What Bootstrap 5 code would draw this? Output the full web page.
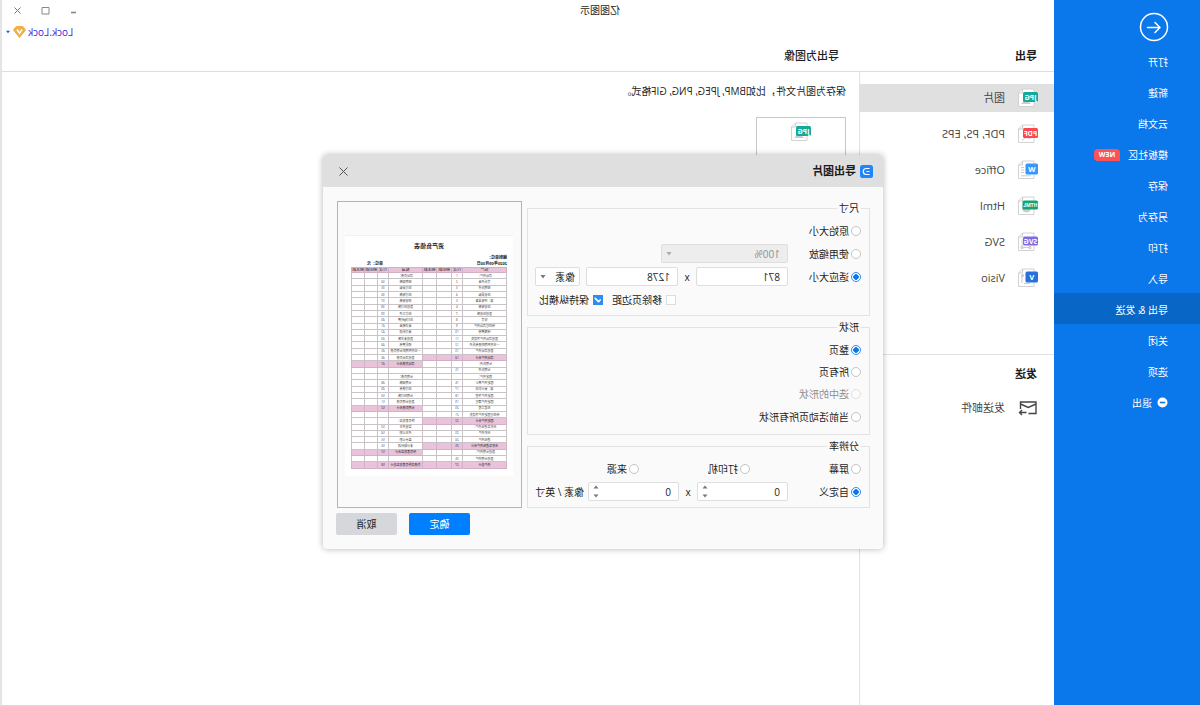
<!DOCTYPE html>
<html lang="zh-CN">
<head>
<meta charset="utf-8">
<meta name="viewport" content="width=device-width, initial-scale=1">
<title>亿图图示</title>
<link href="https://cdn.jsdelivr.net/npm/bootstrap@5.3.0/dist/css/bootstrap.min.css" rel="stylesheet">
<style>
  body { font-family: "Open Sans", "Noto Sans CJK SC", sans-serif; font-size: 10px; line-height: 14px; color: #1c1c1c; background: #fff; overflow: hidden; }
  /* the whole window is shown as a mirror image */
  .app-window { transform: scaleX(-1); border-right: 2px solid #e4e4e4; border-bottom: 1px solid #d9d9d9; }
  .fs-title { font-size: 11px; line-height: 16px; }

  .side-menu { width: 146px; background: #0a77eb; }
  .side-menu .back-btn { margin: 12px 0 3px 31px; width: 30px; height: 30px; }
  .side-menu .nav-link { height: 31px; padding: 2px 0 0 32px; color: #fff; font-size: 10px; }
  .side-menu .nav-link.active { background: #0766c6; }
  .side-menu .nav-link svg { margin-right: 5px; }
  .new-tag { background: #ff5257; font-size: 7px; line-height: 12px; width: 26px; border-radius: 4px 4px 4px 0; margin-left: 8px; }

  .title-row { height: 20px; }
  .window-tools { width: 144px; padding-right: 11px; gap: 19px; }
  .window-tools button { width: 9px; height: 18px; }
  .account-row { height: 24px; padding-right: 3px; }
  .account-row a { color: #3a20e0; gap: 2px; }
  .heading-row { height: 28px; border-bottom: 1px solid #dedede; padding-bottom: 3px; }
  .export-col { width: 195px; }
  .heading-row .export-col { padding-left: 17px; }
  .heading-row .pane-title { padding-left: 20px; font-weight: 500; }
  .export-list { border-right: 1px solid #e2e2e2; }
  .export-list .nav { padding: 12px 0 62px; gap: 8px; }
  .export-list .nav-link { height: 28px; padding: 0 0 0 16px; gap: 13px; color: #444; font-size: 11px; }
  .export-list .nav-link.active { background: #e0e0e0; }
  .send-block { border-top: 1px solid #e2e2e2; }
  .send-block h2 { margin: 11px 0 12px; padding-left: 17px; }
  .pane { padding: 12px 13px; }
  .format-card { width: 90px; height: 90px; border: 1px solid #c8c8c8; margin-top: 19px; padding-top: 4px; background: #fff; }

  .dialog-layer { position: absolute; inset: 0; padding: 0 4px 1px 0; }
  .export-dialog { width: 560px; border-radius: 4px; background: #fafafa; box-shadow: 0 0 6px rgba(0,0,0,.3); overflow: hidden; }
  .dialog-head { height: 32px; background: #dfdfdf; padding: 0 16px 0 10px; gap: 4px; }
  .dialog-main { padding: 14px 13px 0; gap: 5px; }
  .option-col { width: 343px; }
  .option-col fieldset { border: 1px solid #e3e3e3; padding: 4px 7px 4px 8px; margin-bottom: 4px; }
  .option-col fieldset.shape-set { padding-bottom: 6px; }
  .option-col legend { float: none; width: auto; height: 14px; margin: 0; padding: 0 2px; font-size: 10px; line-height: 14px; }
  .opt-row { height: 23px; display: flex; align-items: center; }
  .opt-row.tight { height: 22px; }
  .opt-row.checks { justify-content: flex-end; gap: 9px; padding-right: 4px; }
  .opt { display: flex; align-items: center; gap: 2px; white-space: nowrap; }
  .checks .opt { gap: 4px; }
  .opt.lead-col { width: 73px; }
  .opt.wide-col { width: 111px; }
  .opt .form-check-input { width: 10px; height: 10px; margin: 0; border: 1px solid #c4c4c4; box-shadow: none; flex: none; }
  .opt .form-check-input[type=radio]:checked { border-color: #2b8cf5; background: #fff radial-gradient(circle, #0a77eb 0 2.5px, transparent 3px); }
  .opt .form-check-input[type=checkbox] { border-radius: 0; border-color: #dcdcdc; }
  .opt .form-check-input[type=checkbox]:checked { background-color: #2b8cf5; border-color: #2b8cf5; background-size: 11px; background-position: center; }
  .opt .form-check-input:disabled { opacity: .5; }
  .opt .form-check-input:disabled + label { color: #8d8d8d; }
  .field { width: 92px; height: 19px; min-height: 0; padding: 0 7px; font-size: 10px; line-height: 16px; border: 1px solid #dedede; border-radius: 2px; color: #1c1c1c; background-color: #fff; }
  select.field { background-image: url("data:image/svg+xml,%3Csvg xmlns='http://www.w3.org/2000/svg' viewBox='0 0 6 4'%3E%3Cpath fill='%23777' d='M.5 0h5L3 3.6z'/%3E%3C/svg%3E"); background-size: 6px 4px; background-position: right 4px center; }
  select.field:disabled { width: 127px; background-color: #ededed; color: #8d8d8d; background-image: url("data:image/svg+xml,%3Csvg xmlns='http://www.w3.org/2000/svg' viewBox='0 0 6 4'%3E%3Cpath fill='%23aaa' d='M.5 0h5L3 3.6z'/%3E%3C/svg%3E"); }
  select.field.unit { width: 45px; padding: 0 10px 0 4px; }
  input.spin { appearance: textfield; width: 91px; background: #fff url("data:image/svg+xml,%3Csvg xmlns='http://www.w3.org/2000/svg' viewBox='0 0 6 13'%3E%3Cpath fill='%23777' d='M.5 3.6h5L3 .4zM.5 9.4h5L3 12.6z'/%3E%3C/svg%3E") no-repeat right 4px center / 6px 13px; }
  input.spin::-webkit-inner-spin-button { display: none; }
  .by { width: 18px; text-align: center; }

  .preview { width: 185px; border: 1px solid #b4b4b4; height: 307px; padding: 33px 7px 0 8px; }
  .paper { background: #fff; border-top: 1px solid #f0f0f0; height: 241px; padding: 5px 6px 0; font-size: 4px; line-height: 6px; color: #222; }
  .paper h3 { font-size: 6px; line-height: 10px; margin: 0 0 4px; font-weight: 700; text-align: center; }
  .paper .unit-note { padding-right: 16px; }
  .sheet { width: 155px; height: 202px; table-layout: fixed; border-collapse: collapse; font-size: 3px; line-height: 4px; color: #444; text-align: center; }
  .sheet th, .sheet td { border: 1px solid #c9c3c7; padding: 0; white-space: nowrap; font-weight: 400; overflow: hidden; }
  .sheet th { font-size: 4px; }
  .sheet .total { background: #e8c3da; border-color: #d3b0c6; color: #222; }

  .dialog-foot { padding: 5px 13px 14px; gap: 12px; }
  .dialog-foot .btn { width: 61px; height: 22px; padding: 0; font-size: 10px; line-height: 20px; border: 0; border-radius: 2px; }
  .btn-ok { background: #0080ff; color: #fff; }
  .btn-no { background: #d5d7db; color: #1c1c1c; }
</style>
</head>
<body>
<div class="app-window position-relative d-flex vh-100 bg-white">

  <aside class="side-menu flex-shrink-0 d-flex flex-column">
    <button class="back-btn btn p-0 border-0 d-block" type="button" aria-label="返回">
      <svg class="d-block" width="30" height="30" viewBox="0 0 30 30" fill="none" stroke="#fff" stroke-linecap="round" stroke-linejoin="round"><circle cx="15" cy="15" r="13.5" stroke-width="1.5"/><path d="M21.5 15.5H9.5M14 10.5l-5 5 5 5" stroke-width="1.5"/></svg>
    </button>
    <nav class="nav flex-column">
      <a class="nav-link d-flex align-items-center" href="#">打开</a>
      <a class="nav-link d-flex align-items-center" href="#">新建</a>
      <a class="nav-link d-flex align-items-center" href="#">云文档</a>
      <a class="nav-link d-flex align-items-center" href="#">模板社区<span class="new-tag text-center fw-bold">NEW</span></a>
      <a class="nav-link d-flex align-items-center" href="#">保存</a>
      <a class="nav-link d-flex align-items-center" href="#">另存为</a>
      <a class="nav-link d-flex align-items-center" href="#">打印</a>
      <a class="nav-link d-flex align-items-center" href="#">导入</a>
      <a class="nav-link d-flex align-items-center active" href="#" aria-current="page">导出 &amp; 发送</a>
      <a class="nav-link d-flex align-items-center" href="#">关闭</a>
      <a class="nav-link d-flex align-items-center" href="#">选项</a>
      <a class="nav-link d-flex align-items-center" href="#"><svg width="11" height="11" viewBox="0 0 11 11"><circle cx="5.5" cy="5.5" r="5" fill="#fff"/><path d="M2.8 5.5h5.4" stroke="#0a77eb" stroke-width="1.6"/></svg>退出</a>
    </nav>
  </aside>

  <main class="flex-fill d-flex flex-column">
    <header>
      <div class="title-row d-flex align-items-center">
        <div class="flex-fill text-center">亿图图示</div>
        <div class="window-tools d-flex justify-content-end">
          <button class="btn p-0 border-0 d-flex align-items-center" type="button" aria-label="最小化"><svg width="9" height="9" viewBox="0 0 9 9"><path d="M2 6.500h5" stroke="#888" stroke-width="1.600"/></svg></button>
          <button class="btn p-0 border-0 d-flex align-items-center" type="button" aria-label="最大化"><svg width="9" height="9" viewBox="0 0 9 9"><path d="M1 1.500h7v6.500h-7z" fill="none" stroke="#888"/></svg></button>
          <button class="btn p-0 border-0 d-flex align-items-center" type="button" aria-label="关闭"><svg width="9" height="9" viewBox="0 0 9 9"><path d="M1.500 1.500l6 6M7.500 1.500l-6 6" stroke="#777"/></svg></button>
        </div>
      </div>
      <div class="account-row d-flex align-items-center justify-content-end">
        <a class="text-decoration-none d-flex align-items-center" href="#">Lock.Lock
          <svg width="13" height="12" viewBox="0 0 13 12"><path d="M3.200.5h6.600L12.500 4 6.500 11.500.5 4z" fill="#eeb04b" stroke="#eeb04b" stroke-linejoin="round"/><path d="M4 3.500l2.500 3.700L9 3.500" fill="none" stroke="#fff" stroke-width="1.500"/></svg>
          <svg width="6" height="4" viewBox="0 0 6 4"><path d="M1 .7h4L3 3.200z" fill="#1560b8"/></svg>
        </a>
      </div>
      <div class="heading-row d-flex align-items-center">
        <div class="export-col fs-title fw-bold">导出</div>
        <div class="pane-title fs-title">导出为图像</div>
      </div>
    </header>

    <div class="d-flex flex-fill">
      <div class="export-col export-list flex-shrink-0">
        <nav class="nav flex-column flex-nowrap">
          <a class="nav-link d-flex align-items-center active" href="#">
            <svg width="20" height="20" viewBox="0 0 20 20"><path d="M4 1h11.500l4 4v13.500H4z" fill="#fff" stroke="#d2d2d2"/><path d="M15.500 1v4h4" fill="none" stroke="#d2d2d2"/><path d="M7 16l5-5 5 5z" fill="#ccc"/><rect y="4" width="15" height="10" rx="1.500" fill="#14a99b"/><text x="7.500" y="11.500" font-size="7" font-weight="700" fill="#fff" text-anchor="middle">JPG</text></svg>图片</a>
          <a class="nav-link d-flex align-items-center" href="#">
            <svg width="20" height="20" viewBox="0 0 20 20"><path d="M4 1h11.500l4 4v13.500H4z" fill="#fff" stroke="#d2d2d2"/><path d="M15.500 1v4h4M7 14.500l5-1 4 3" fill="none" stroke="#ccc"/><rect y="4" width="15" height="10" rx="1.500" fill="#fc494f"/><text x="7.500" y="11.500" font-size="7" font-weight="700" fill="#fff" text-anchor="middle">PDF</text></svg>PDF, PS, EPS</a>
          <a class="nav-link d-flex align-items-center" href="#">
            <svg width="20" height="20" viewBox="0 0 20 20"><path d="M4 1h11.500l4 4v13.500H4z" fill="#fff" stroke="#d2d2d2"/><path d="M15.500 1v4h4M14 7.500h3M14 10h3M14 12.500h3M7 15.800h10" fill="none" stroke="#ccc"/><rect y="3.500" width="12.500" height="11" rx="1.500" fill="#3a96f9"/><text x="6.200" y="11.800" font-size="7.500" font-weight="700" fill="#fff" text-anchor="middle">W</text></svg>Office</a>
          <a class="nav-link d-flex align-items-center" href="#">
            <svg width="20" height="20" viewBox="0 0 20 20"><path d="M4 1h11.500l4 4v13.500H4z" fill="#fff" stroke="#d2d2d2"/><path d="M15.500 1v4h4" fill="none" stroke="#ccc"/><circle cx="11.500" cy="12" r="4.500" fill="#ccc"/><rect y="4.500" width="15.500" height="9" rx="1.500" fill="#14a276"/><text x="7.700" y="11" font-size="5" font-weight="700" fill="#fff" text-anchor="middle">HTML</text></svg>Html</a>
          <a class="nav-link d-flex align-items-center" href="#">
            <svg width="20" height="20" viewBox="0 0 20 20"><path d="M4 1h11.500l4 4v13.500H4z" fill="#fff" stroke="#d2d2d2"/><path d="M15.500 1v4h4M8 15.500h8V7M7 14.500h2v2H7zM15 14.500h2v2h-2z" fill="none" stroke="#ccc"/><rect y="4.500" width="15" height="9" rx="1.500" fill="#806be3"/><text x="7.500" y="11.500" font-size="7" font-weight="700" fill="#fff" text-anchor="middle">SVG</text></svg>SVG</a>
          <a class="nav-link d-flex align-items-center" href="#">
            <svg width="20" height="20" viewBox="0 0 20 20"><path d="M4 1h11.500l4 4v13.500H4z" fill="#fff" stroke="#d2d2d2"/><path d="M15.500 1v4h4M16 7v8M8 15.500h6" fill="none" stroke="#ccc"/><circle cx="15.500" cy="7.500" r="1.500" fill="#ccc"/><rect y="3.500" width="12.500" height="11" rx="1.500" fill="#2672d8"/><text x="6.200" y="11.800" font-size="7.500" font-weight="700" fill="#fff" text-anchor="middle">V</text></svg>Visio</a>
        </nav>
        <div class="send-block">
          <h2 class="fs-title fw-bold">发送</h2>
          <a class="nav-link d-flex align-items-center" href="#">
            <svg width="20" height="16" viewBox="0 0 20 16" fill="none" stroke="#444" stroke-width="1.400"><path d="M17.500 9V2H2v11.500h7.500"/><path d="M2 4l7.700 3.500L17.500 4"/><path d="M11.500 12.500h7M14 10l-2.500 2.500 2.500 2.500" transform="matrix(-1 0 0 1 30 0)"/></svg>发送邮件</a>
        </div>
      </div>

      <section class="pane flex-fill">
        <div>保存为图片文件，比如BMP, JPEG, PNG, GIF格式。</div>
        <div class="format-card text-center">
          <svg width="20" height="20" viewBox="0 0 20 20"><path d="M4 1h11.500l4 4v13.500H4z" fill="#fff" stroke="#d2d2d2"/><path d="M15.500 1v4h4" fill="none" stroke="#d2d2d2"/><path d="M7 16l5-5 5 5z" fill="#ccc"/><rect y="4" width="15" height="10" rx="1.500" fill="#14a99b"/><text x="7.500" y="11.500" font-size="7" font-weight="700" fill="#fff" text-anchor="middle">JPG</text></svg>
        </div>
      </section>
    </div>
  </main>

  <div class="dialog-layer d-flex align-items-center justify-content-center">
    <div class="export-dialog" role="dialog" aria-labelledby="dlgTitle">
      <div class="dialog-head d-flex align-items-center">
        <svg width="13" height="13" viewBox="0 0 13 13"><rect width="13" height="13" rx="2.500" fill="#1f86fb"/><path d="M3.500 3.500h3.200a3 3 0 0 1 0 6H3.500M3.500 6.500h3" fill="none" stroke="#fff" stroke-width="1.200"/></svg>
        <div class="fs-title fw-bold flex-fill" id="dlgTitle">导出图片</div>
        <button class="btn p-0 border-0 d-flex" type="button" aria-label="关闭"><svg width="9" height="9" viewBox="0 0 9 9"><path d="M.5.5l8 8M8.500.5l-8 8" stroke="#555"/></svg></button>
      </div>

      <div class="dialog-main d-flex">
        <form class="option-col">
          <fieldset>
            <legend>尺寸</legend>
            <div class="opt-row"><div class="opt"><input class="form-check-input" type="radio" name="size" id="s1"><label for="s1">原始大小</label></div></div>
            <div class="opt-row"><div class="opt lead-col"><input class="form-check-input" type="radio" name="size" id="s2"><label for="s2">使用缩放</label></div>
              <select class="form-select field" aria-label="缩放" disabled><option>100%</option></select></div>
            <div class="opt-row"><div class="opt lead-col"><input class="form-check-input" type="radio" name="size" id="s3" checked><label for="s3">适应大小</label></div>
              <input class="form-control field" type="text" value="871" aria-label="宽"><span class="by">x</span><input class="form-control field" type="text" value="1278" aria-label="高">
              <select class="form-select field unit ms-auto" aria-label="单位"><option>像素</option></select></div>
            <div class="opt-row checks"><div class="opt"><input class="form-check-input" type="checkbox" id="c1"><label for="c1">移除页边距</label></div>
              <div class="opt"><input class="form-check-input" type="checkbox" id="c2" checked><label for="c2">保持纵横比</label></div></div>
          </fieldset>
          <fieldset class="shape-set">
            <legend>形状</legend>
            <div class="opt-row"><div class="opt"><input class="form-check-input" type="radio" name="shape" id="p1" checked><label for="p1">整页</label></div></div>
            <div class="opt-row tight"><div class="opt"><input class="form-check-input" type="radio" name="shape" id="p2"><label for="p2">所有页</label></div></div>
            <div class="opt-row tight"><div class="opt"><input class="form-check-input" type="radio" name="shape" id="p3" disabled><label for="p3">选中的形状</label></div></div>
            <div class="opt-row"><div class="opt"><input class="form-check-input" type="radio" name="shape" id="p4"><label for="p4">当前活动页所有形状</label></div></div>
          </fieldset>
          <fieldset class="mb-0">
            <legend>分辨率</legend>
            <div class="opt-row"><div class="opt wide-col"><input class="form-check-input" type="radio" name="dpi" id="d1"><label for="d1">屏幕</label></div>
              <div class="opt wide-col"><input class="form-check-input" type="radio" name="dpi" id="d2"><label for="d2">打印机</label></div>
              <div class="opt"><input class="form-check-input" type="radio" name="dpi" id="d3"><label for="d3">来源</label></div></div>
            <div class="opt-row"><div class="opt lead-col"><input class="form-check-input" type="radio" name="dpi" id="d4" checked><label for="d4">自定义</label></div>
              <input class="form-control field spin" type="number" value="0" aria-label="水平"><span class="by">x</span><input class="form-control field spin" type="number" value="0" aria-label="垂直">
              <span class="ms-1">像素 / 英寸</span></div>
          </fieldset>
        </form>

        <div class="preview">
          <div class="paper">
            <h3>资产负债表</h3>
            <div class="fw-bold">编制单位：</div>
            <div class="d-flex justify-content-between fw-bold"><span>2020年09月30日</span><span class="unit-note">单位：元</span></div>
            <table class="sheet">
              <colgroup><col style="width:44px"><col style="width:11px"><col style="width:15px"><col style="width:14px"><col style="width:34px"><col style="width:11px"><col style="width:13px"><col style="width:13px"></colgroup>
              <thead><tr><th class="total">资产</th><th class="total">行次</th><th class="total">期初数</th><th class="total">期末数</th><th class="total">权益</th><th class="total">行次</th><th class="total">期初数</th><th class="total">期末数</th></tr></thead>
              <tbody id="sheetRows"></tbody>
            </table>
          </div>
        </div>
      </div>

      <div class="dialog-foot d-flex justify-content-end">
        <button class="btn btn-ok" type="button">确定</button>
        <button class="btn btn-no" type="button">取消</button>
      </div>
    </div>
  </div>
</div>

<script src="https://cdn.jsdelivr.net/npm/bootstrap@5.3.0/dist/js/bootstrap.bundle.min.js"></script>
<script>
  // Balance sheet: asset, line no., equity, line no. A leading * marks a total.
  const rows = [
    ["流动资产：","1","流动负债：",""],["货币资金","2","短期借款","34"],["短期投资","3","应付票据","35"],["应收票据","4","应付账款","36"],
    ["减：坏账准备","5","预收账款","37"],["应收账款","6","其他应付款","38"],["其他应收款","7","应付工资","39"],["存货","8","应付福利费","40"],
    ["待处理流动资产","9","未交税金","41"],["待摊费用","10","未付利润","42"],["其他流动资产净损失","11","其他未交款","43"],["一年内到期的债券投资","12","预提费用","44"],
    ["其他流动资产","13","一年内到期的长期负债","45"],["*流动资产合计","14","其他流动负债","46"],["长期投资：","","*流动负债合计","47"],["长期投资","15","",""],
    ["固定资产：","","长期负债：",""],["固定资产原价","16","长期借款","48"],["减：累计折旧","17","应付债券","49"],["固定资产净值","18","长期应付款","50"],
    ["固定资产清理","19","其他长期负债","51"],["在建工程","20","*长期负债合计","52"],["待处理固定资产净损失","21","",""],["*固定资产合计","22","所有者权益：",""],
    ["无形及递延资产：","","实收资本","53"],["无形资产","23","资本公积","54"],["递延资产","24","盈余公积","55"],["*无形及递延资产合计","25","未分配利润","56"],
    ["其他长期资产：","","*所有者权益合计","57"],["其他长期资产","26","",""],["*资产总计","27","*负债及所有者权益总计","58"]
  ];
  const half = (name, no) => {
    const cls = name.startsWith("*") ? ' class="total"' : "";
    return `<td${cls}>${name.replace("*", "")}</td><td${cls}>${no}</td><td${cls}></td><td${cls}></td>`;
  };
  document.getElementById("sheetRows").innerHTML = rows.map(r => `<tr>${half(r[0], r[1])}${half(r[2], r[3])}</tr>`).join("");
</script>
</body>
</html>
